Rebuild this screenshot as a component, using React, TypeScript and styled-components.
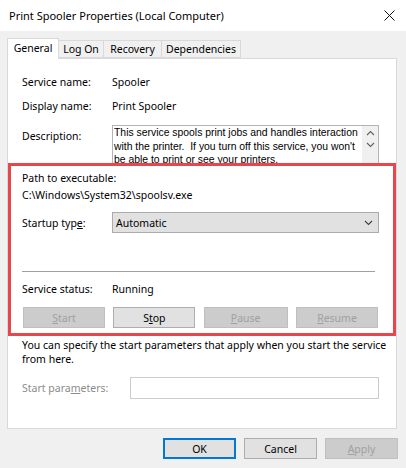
import { FC, ReactNode } from "react";
import styled, { createGlobalStyle } from "styled-components";

const GlobalStyle = createGlobalStyle`
  html, body {
    margin: 0;
    padding: 0;
    background: #f0f0f0;
  }
  body {
    font-family: "Noto Sans", "Liberation Sans", sans-serif;
    font-size: 10.5px;
    color: #000;
  }
`;

const Window = styled.div`
  width: 406px;
  height: 468px;
  display: flex;
  flex-direction: column;
  background: #f0f0f0;
  overflow: hidden;
`;

const TitleBar = styled.div`
  height: 31px;
  flex-shrink: 0;
  display: flex;
  align-items: center;
  justify-content: space-between;
  padding: 0 11px 0 9px;
  background: #fff;
`;

const Title = styled.span`
  font-size: 11px;
  margin-top: -1px;
`;

const Body = styled.div`
  flex: 1;
  display: flex;
  flex-direction: column;
  padding: 7px 9px 0 7px;
`;

const TabStrip = styled.div`
  display: flex;
  align-items: flex-end;
  height: 20px;
  position: relative;
  z-index: 1;
`;

const Tab = styled.div<{ $active?: boolean; $w: number }>`
  display: flex;
  align-items: center;
  justify-content: center;
  box-sizing: border-box;
  white-space: nowrap;
  border: 1px solid #d9d9d9;
  border-left-width: ${(p) => (p.$active ? "1px" : "0")};
  height: ${(p) => (p.$active ? "21px" : "18px")};
  margin-bottom: ${(p) => (p.$active ? "-1px" : "0")};
  border-bottom: ${(p) => (p.$active ? "none" : "1px solid #d9d9d9")};
  background: ${(p) => (p.$active ? "#fff" : "#f0f0f0")};
  padding-bottom: ${(p) => (p.$active ? "2px" : "0")};
  width: ${(p) => p.$w}px;
`;

const Panel = styled.div`
  box-sizing: border-box;
  height: 371px;
  background: #fff;
  border: 1px solid #d9d9d9;
  display: flex;
  flex-direction: column;
`;

const TopSection = styled.div`
  padding: 15px 17px 0 14px;
  display: flex;
  flex-direction: column;
`;

const Row = styled.div<{ $mt?: number; $align?: string; $cols?: string }>`
  display: grid;
  grid-template-columns: ${(p) => p.$cols ?? "90px 1fr"};
  align-items: ${(p) => p.$align ?? "center"};
  line-height: 16px;
  margin-top: ${(p) => p.$mt ?? 0}px;
  white-space: nowrap;
`;

const Label = styled.span<{ $disabled?: boolean; $pt?: number }>`
  color: ${(p) => (p.$disabled ? "#8c8c8c" : "#000")};
  padding-top: ${(p) => p.$pt ?? 0}px;
`;

const DescBox = styled.div`
  position: relative;
  box-sizing: border-box;
  height: 38px;
  border: 1px solid #b4b4b4;
  border-bottom: none;
  overflow: hidden;
  padding: 0 18px 0 1px;
  font-family: "Liberation Sans", Arial, sans-serif;
  font-size: 10.4px;
  line-height: 13.5px;
  white-space: normal;
`;

const ScrollBar = styled.div`
  position: absolute;
  top: 0;
  right: 0;
  width: 16px;
  height: 100%;
  background: #f0f0f0;
  display: flex;
  flex-direction: column;
  align-items: center;
  padding-top: 4px;
  gap: 6px;
`;

const Highlight = styled.div`
  border: 3px solid #e5474d;
  padding: 4px 14px 5px 11px;
  display: flex;
  flex-direction: column;
  position: relative;
  z-index: 1;
`;

const Select = styled.div`
  box-sizing: border-box;
  height: 21px;
  background: #e1e1e1;
  border: 1px solid #acacac;
  display: flex;
  align-items: center;
  justify-content: space-between;
  padding: 0 5px 0 3px;
`;

const Separator = styled.div`
  height: 1px;
  background: #a0a0a0;
  margin: 38px 4px 0 0;
`;

const ButtonRow = styled.div`
  display: grid;
  grid-template-columns: 82px 82px 84px 82px;
  justify-content: space-between;
  margin: 10px 1px 0 1px;
`;

const Button = styled.div<{ $disabled?: boolean; $default?: boolean }>`
  box-sizing: border-box;
  height: 21px;
  display: flex;
  align-items: center;
  justify-content: center;
  background: ${(p) => (p.$disabled ? "#cccccc" : "#e1e1e1")};
  border: ${(p) =>
    p.$default
      ? "2px solid #0078d7"
      : p.$disabled
      ? "1px solid #bfbfbf"
      : "1px solid #adadad"};
  color: ${(p) => (p.$disabled ? "#a0a0a0" : "#000")};
`;

const BottomSection = styled.div`
  padding: 3px 17px 0 14px;
  display: flex;
  flex-direction: column;
`;

const Note = styled.div`
  line-height: 13.5px;
  white-space: nowrap;
`;

const Input = styled.div`
  box-sizing: border-box;
  height: 22px;
  border: 1px solid #cccccc;
  background: #fff;
`;

const Footer = styled.div`
  display: grid;
  grid-template-columns: repeat(3, 73px);
  gap: 8px;
  justify-content: end;
  margin: 9px -1px 0 0;
`;

const U = styled.span`
  text-decoration: underline;
  text-underline-offset: 1px;
`;

const Chevron: FC<{ up?: boolean; color?: string }> = ({ up, color = "#606060" }) => (
  <svg width="9" height="6" viewBox="0 0 9 6">
    <path
      d={up ? "M1 5 L4.5 1.5 L8 5" : "M1 1 L4.5 4.5 L8 1"}
      fill="none"
      stroke={color}
      strokeWidth="1.1"
    />
  </svg>
);

const CloseIcon = () => (
  <svg width="11" height="11" viewBox="0 0 11 11">
    <path d="M0.5 0.5 L10.5 10.5 M10.5 0.5 L0.5 10.5" stroke="#111" strokeWidth="1" />
  </svg>
);

const tabs: { name: string; w: number }[] = [
  { name: "General", w: 52 },
  { name: "Log On", w: 45 },
  { name: "Recovery", w: 58 },
  { name: "Dependencies", w: 79 },
];

const InfoRow: FC<{ label: string; mt?: number; children: ReactNode }> = ({
  label,
  mt,
  children,
}) => (
  <Row $mt={mt}>
    <Label>{label}</Label>
    <span>{children}</span>
  </Row>
);

export default function App() {
  return (
    <>
      <GlobalStyle />
      <Window>
        <TitleBar>
          <Title>Print Spooler Properties (Local Computer)</Title>
          <CloseIcon />
        </TitleBar>
        <Body>
          <TabStrip>
            {tabs.map((t, i) => (
              <Tab key={t.name} $active={i === 0} $w={t.w}>
                {t.name}
              </Tab>
            ))}
          </TabStrip>
          <Panel>
            <TopSection>
              <InfoRow label="Service name:">Spooler</InfoRow>
              <InfoRow label="Display name:" mt={8}>
                Print Spooler
              </InfoRow>
              <Row $mt={11} $align="start">
                <Label $pt={3}>Description:</Label>
                <DescBox>
                  This service spools print jobs and handles interaction with the
                  printer. &nbsp;If you turn off this service, you won't be able to
                  print or see your printers.
                  <ScrollBar>
                    <Chevron up />
                    <Chevron />
                  </ScrollBar>
                </DescBox>
              </Row>
            </TopSection>
            <Highlight>
              <Row $cols="1fr">
                <span>Path to executable:</span>
              </Row>
              <Row $cols="1fr" $mt={1}>
                <span>C:\Windows\System32\spoolsv.exe</span>
              </Row>
              <Row $mt={9}>
                <Label>
                  Startup typ<U>e</U>:
                </Label>
                <Select>
                  <span>Automatic</span>
                  <Chevron color="#404040" />
                </Select>
              </Row>
              <Separator />
              <Row $mt={9}>
                <Label>Service status:</Label>
                <span>Running</span>
              </Row>
              <ButtonRow>
                <Button $disabled>
                  <U>S</U>tart
                </Button>
                <Button>
                  S<U>t</U>op
                </Button>
                <Button $disabled>
                  <U>P</U>ause
                </Button>
                <Button $disabled>
                  <U>R</U>esume
                </Button>
              </ButtonRow>
            </Highlight>
            <BottomSection>
              <Note>
                You can specify the start parameters that apply when you start the
                service
                <br />
                from here.
              </Note>
              <Row $cols="108px 1fr" $mt={11}>
                <Label $disabled>
                  Start para<U>m</U>eters:
                </Label>
                <Input />
              </Row>
            </BottomSection>
          </Panel>
          <Footer>
            <Button $default>OK</Button>
            <Button>Cancel</Button>
            <Button $disabled>
              <U>A</U>pply
            </Button>
          </Footer>
        </Body>
      </Window>
    </>
  );
}
